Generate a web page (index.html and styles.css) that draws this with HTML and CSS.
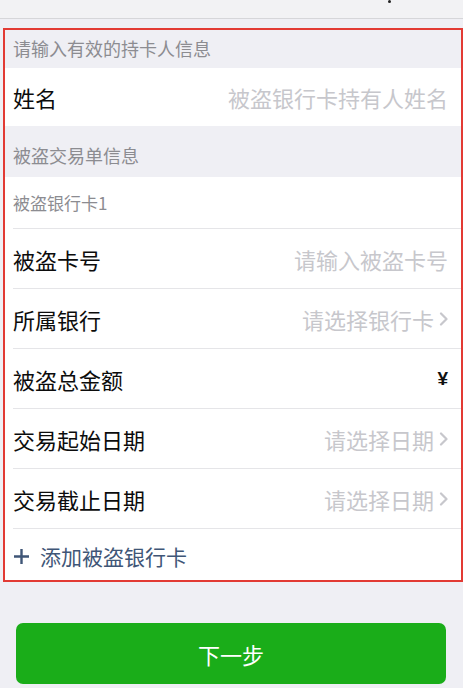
FILE: index.html
```html
<!DOCTYPE html>
<html lang="zh-CN">
<head>
<meta charset="utf-8">
<title>被盗交易单信息</title>
<link rel="stylesheet" href="styles.css">
</head>
<body>
<div class="navbar"><span class="nav-dot"></span></div>
<div class="form">
  <div class="section-head head-first">请输入有效的持卡人信息</div>
  <div class="group">
    <div class="row row-name">
      <span class="label">姓名</span>
      <span class="placeholder">被盗银行卡持有人姓名</span>
    </div>
  </div>
  <div class="section-head head-second">被盗交易单信息</div>
  <div class="group">
    <div class="card-title">被盗银行卡1</div>
    <div class="row">
      <span class="label">被盗卡号</span>
      <span class="placeholder">请输入被盗卡号</span>
    </div>
    <div class="row">
      <span class="label">所属银行</span>
      <span class="value-link"><span class="placeholder">请选择银行卡</span><svg class="chevron" width="10" height="14" viewBox="0 0 10 14"><path d="M2 1.5 L7.5 7 L2 12.5" fill="none" stroke="#c7c7cc" stroke-width="2.2" stroke-linecap="round" stroke-linejoin="round"/></svg></span>
    </div>
    <div class="row">
      <span class="label">被盗总金额</span>
      <span class="yen">¥</span>
    </div>
    <div class="row">
      <span class="label">交易起始日期</span>
      <span class="value-link"><span class="placeholder">请选择日期</span><svg class="chevron" width="10" height="14" viewBox="0 0 10 14"><path d="M2 1.5 L7.5 7 L2 12.5" fill="none" stroke="#c7c7cc" stroke-width="2.2" stroke-linecap="round" stroke-linejoin="round"/></svg></span>
    </div>
    <div class="row">
      <span class="label">交易截止日期</span>
      <span class="value-link"><span class="placeholder">请选择日期</span><svg class="chevron" width="10" height="14" viewBox="0 0 10 14"><path d="M2 1.5 L7.5 7 L2 12.5" fill="none" stroke="#c7c7cc" stroke-width="2.2" stroke-linecap="round" stroke-linejoin="round"/></svg></span>
    </div>
    <div class="row row-add">
      <svg class="plus" width="17" height="17" viewBox="0 0 17 17"><path d="M8.5 1 V16 M1 8.5 H16" fill="none" stroke="#3f5677" stroke-width="2.4"/></svg>
      <span class="add-text">添加被盗银行卡</span>
    </div>
  </div>
</div>
<div class="actions">
  <button class="btn-next" type="button">下一步</button>
</div>
</body>
</html>
```
FILE: styles.css
```css
* { box-sizing: border-box; }
html, body { margin: 0; padding: 0; }
body {
  background: #efeff4;
  font-family: "Noto Sans CJK SC", "Noto Sans", sans-serif;
  width: 463px;
  height: 688px;
  overflow: hidden;
}
.navbar {
  height: 19px;
  background: #f2f2f4;
  border-bottom: 1px solid #d6d6d9;
  display: flex;
  justify-content: flex-end;
  align-items: flex-start;
  padding-right: 72px;
}
.nav-dot {
  width: 3px;
  height: 3px;
  border-radius: 50%;
  background: #222;
}
.form {
  margin: 9px 0 0 3px;
  border: 2px solid #e23a34;
  width: 460px;
}
.section-head {
  color: #8c8c91;
  font-size: 18px;
  line-height: 22px;
  padding-left: 8px;
  background: #efeff4;
}
.head-first { padding-top: 7px; padding-bottom: 9px; }
.head-second { padding-top: 18px; padding-bottom: 11px; }
.group {
  background: #fff;
  padding-left: 8px;
}
.row {
  height: 60px;
  border-top: 1px solid #e5e5e8;
  display: flex;
  align-items: center;
  justify-content: space-between;
  padding-right: 13px;
}
.row-name { height: 58px; border-top: none; }
.label {
  color: #0c0c0c;
  font-size: 22px;
}
.placeholder {
  color: #c7c7cc;
  font-size: 22px;
}
.value-link {
  display: flex;
  align-items: center;
  gap: 5px;
  margin-right: -1px;
}
.chevron { display: block; }
.yen {
  color: #111;
  font-size: 19px;
  font-weight: 700;
  font-family: "Liberation Sans", sans-serif;
}
.card-title {
  height: 51px;
  display: flex;
  align-items: center;
  color: #8c8c91;
  font-size: 17px;
}
.row-add {
  height: 52px;
  justify-content: flex-start;
  gap: 10px;
  padding-top: 3px;
}
.plus { display: block; }
.add-text {
  color: #3f5677;
  font-size: 21px;
}
.actions {
  padding: 41px 17px 0 16px;
}
.btn-next {
  display: block;
  width: 100%;
  height: 61px;
  border: none;
  border-radius: 7px;
  background: #1aad19;
  color: #fff;
  font-family: "Noto Sans CJK SC", sans-serif;
  font-size: 22px;
}
```
